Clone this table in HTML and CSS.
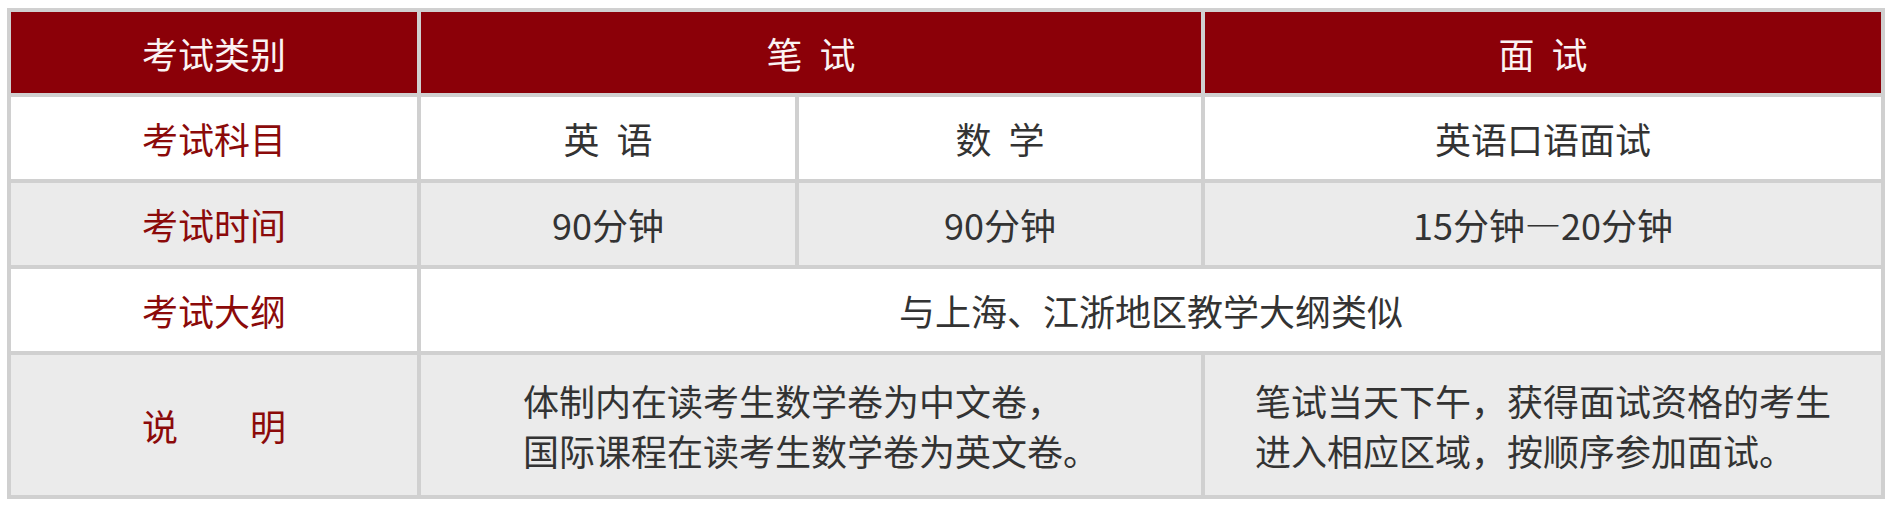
FILE: index.html
```html
<!DOCTYPE html>
<html lang="zh-CN">
<head>
<meta charset="utf-8">
<title>考试安排</title>
<link rel="stylesheet" href="styles.css">
</head>
<body>
<div class="page">
  <div class="exam-table" role="table">
    <div class="cell head" role="columnheader">考试类别</div>
    <div class="cell head span-2" role="columnheader">笔 试</div>
    <div class="cell head" role="columnheader">面 试</div>

    <div class="cell label" role="rowheader">考试科目</div>
    <div class="cell" role="cell">英 语</div>
    <div class="cell" role="cell">数 学</div>
    <div class="cell" role="cell">英语口语面试</div>

    <div class="cell label alt" role="rowheader">考试时间</div>
    <div class="cell alt" role="cell">90分钟</div>
    <div class="cell alt" role="cell">90分钟</div>
    <div class="cell alt" role="cell">15分钟—20分钟</div>

    <div class="cell label" role="rowheader">考试大纲</div>
    <div class="cell span-3" role="cell">与上海、江浙地区教学大纲类似</div>

    <div class="cell label alt" role="rowheader">说　　明</div>
    <div class="cell alt span-2" role="cell"><p class="note">体制内在读考生数学卷为中文卷，<br>国际课程在读考生数学卷为英文卷。</p></div>
    <div class="cell alt" role="cell"><p class="note">笔试当天下午，获得面试资格的考生<br>进入相应区域，按顺序参加面试。</p></div>
  </div>
</div>
</body>
</html>
```

FILE: styles.css
```css
html, body {
  margin: 0;
  padding: 0;
  background: #ffffff;
}

.page {
  padding: 8px 0 0 7px;
}

.exam-table {
  display: grid;
  grid-template-columns: 406px 374px 402px 676px;
  grid-template-rows: 81px 82px 82px 82px 140px;
  gap: 4px;
  padding: 4px;
  width: max-content;
  background: #d0d0d0;
  font-family: "Noto Sans CJK SC", "Noto Sans", sans-serif;
  font-size: 36px;
  color: #333333;
  word-spacing: 9px;
}

.cell {
  display: flex;
  align-items: center;
  justify-content: center;
  background: #ffffff;
  line-height: 50px;
  white-space: nowrap;
}

.cell.alt {
  background: #ebebeb;
}

.cell.head {
  background: #8b0008;
  color: #fbf3f3;
}

.cell.label {
  color: #8b0a0a;
}

.span-2 {
  grid-column: span 2;
}

.span-3 {
  grid-column: span 3;
}

.note {
  margin: 0;
  text-align: left;
}
```
